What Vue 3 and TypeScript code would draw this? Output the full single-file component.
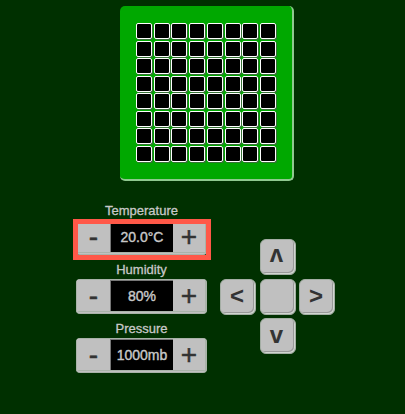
<script setup lang="ts">
import { computed, ref } from 'vue'

interface Sensor {
  id: string
  label: string
  value: number
  step: number
  digits: number
  unit: string
}

const sensors = ref<Sensor[]>([
  { id: 'temperature', label: 'Temperature', value: 20, step: 0.5, digits: 1, unit: '°C' },
  { id: 'humidity', label: 'Humidity', value: 80, step: 1, digits: 0, unit: '%' },
  { id: 'pressure', label: 'Pressure', value: 1000, step: 1, digits: 0, unit: 'mb' },
])
const selected = ref('temperature')
const size = 8
const cells = computed(() => Array.from({ length: size * size }, (_, i) => i))

function change(sensor: Sensor, direction: number) {
  selected.value = sensor.id
  sensor.value += sensor.step * direction
}

const keys = [
  { name: 'up', glyph: 'ʌ' },
  { name: 'left', glyph: '<' },
  { name: 'middle', glyph: '' },
  { name: 'right', glyph: '>' },
  { name: 'down', glyph: 'v' },
]
</script>

<template>
  <main class="page">
    <section class="board" aria-label="LED matrix">
      <div class="matrix">
        <span v-for="cell in cells" :key="cell" class="led"></span>
      </div>
    </section>

    <section class="controls">
      <div class="sensors">
        <div v-for="s in sensors" :key="s.id" class="sensor">
          <label class="label" :for="s.id">{{ s.label }}</label>
          <div class="stepper" :class="{ selected: selected === s.id }">
            <button type="button" class="step" @click="change(s, -1)">-</button>
            <output :id="s.id" class="value">{{ s.value.toFixed(s.digits) }}{{ s.unit }}</output>
            <button type="button" class="step" @click="change(s, 1)">+</button>
          </div>
        </div>
      </div>

      <div class="joystick">
        <button
          v-for="k in keys"
          :key="k.name"
          type="button"
          class="key"
          :class="k.name"
          :aria-label="k.name"
        >{{ k.glyph }}</button>
      </div>
    </section>
  </main>
</template>

<style>
body {
  background: #003000;
}
</style>

<style scoped>
.page {
  display: flex;
  flex-direction: column;
  align-items: center;
  padding: 6px 0 0 9px;
  font-family: "Liberation Sans", Arial, sans-serif;
}
.board {
  padding: 17px 16px;
  background: #00a800;
  border-right: 2px solid #8fc98f;
  border-bottom: 2px solid #8fc98f;
  border-radius: 5px;
}
.matrix {
  display: grid;
  grid-template-columns: repeat(8, 16px);
  grid-template-rows: repeat(8, 16px);
  place-content: space-between;
  width: 140px;
  height: 139px;
}
.led {
  background: #000;
  border: 1px solid #fff;
  border-radius: 2px;
  box-shadow: 1px 1px 0 rgba(80, 90, 80, 0.7);
}
.controls {
  display: flex;
  align-items: flex-start;
  gap: 13px;
  padding: 21px 3px 0 0;
}
.sensors {
  display: flex;
  flex-direction: column;
  gap: 6px;
}
.sensor {
  display: flex;
  flex-direction: column;
}
.label {
  height: 18px;
  line-height: 18px;
  text-align: center;
  font-size: 13px;
  color: #c8c8c8;
  -webkit-text-stroke: 0.3px #c8c8c8;
}
.stepper {
  position: relative;
  display: grid;
  grid-template-columns: 33px 63px 32px;
  height: 31px;
  border: 1px solid #a9b3a9;
  border-right-width: 2px;
  border-bottom: 3px double #a9b3a9;
  border-radius: 4px;
  background: #c0c0c0;
}
.selected::after {
  content: "";
  position: absolute;
  inset: -2px -6px -8px -4px;
  border: 5px solid #ff5848;
  pointer-events: none;
}
.step {
  padding: 0;
  border: 0;
  background: #c0c0c0;
  color: #333;
  font: 28px/28px "Liberation Sans", Arial, sans-serif;
  -webkit-text-stroke: 0.5px #333;
}
.value {
  background: #000;
  color: #c8c8c8;
  border-top: 1px solid #777;
  border-left: 1px solid #777;
  text-align: center;
  font-size: 14px;
  line-height: 30px;
  height: 30px;
  -webkit-text-stroke: 0.4px #c8c8c8;
}
.joystick {
  display: grid;
  grid-template-columns: repeat(3, 36px);
  grid-template-rows: repeat(3, 36px);
  grid-template-areas: ". up ." "left middle right" ". down .";
  place-content: space-between;
  width: 115px;
  height: 115px;
  margin-top: 37px;
}
.key {
  padding: 0 2px 2px 0;
  border: 1px solid #a4aea4;
  border-radius: 6px;
  background: #c0c0c0;
  box-shadow: inset -1px -1px 0 #d0d6d0, inset -2px -2px 0 #999;
  color: #333;
  font: bold 24px/28px "Liberation Sans", Arial, sans-serif;
}
.up { grid-area: up; padding-bottom: 6px; }
.left { grid-area: left; }
.middle { grid-area: middle; }
.right { grid-area: right; }
.down { grid-area: down; }
</style>
